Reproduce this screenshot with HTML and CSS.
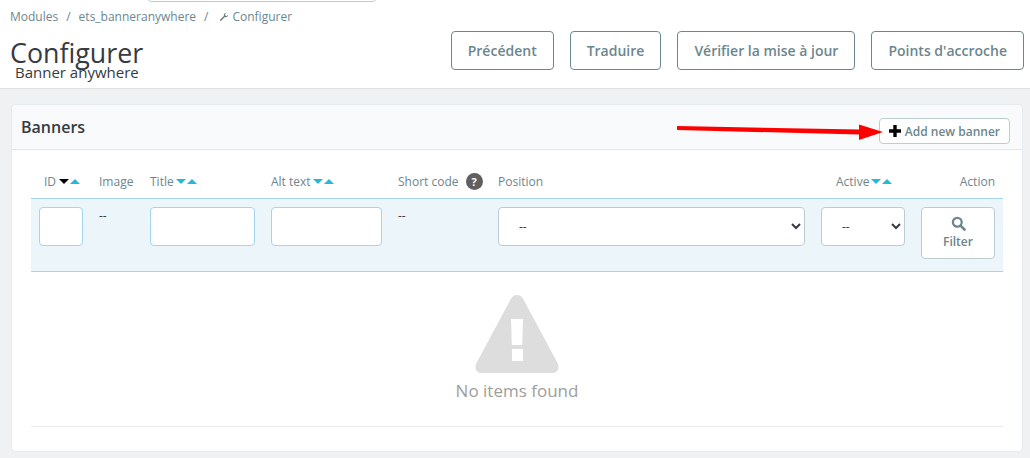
FILE: index.html
```html
<!DOCTYPE html>
<html lang="fr">
<head>
<meta charset="utf-8">
<title>Configurer</title>
<link rel="stylesheet" href="styles.css">
</head>
<body>
<div class="search-stub"></div>
<header class="page-head">
  <div class="head-left">
    <nav class="crumbs">
      <span>Modules</span><span class="sep">/</span><span>ets_banneranywhere</span><span class="sep">/</span>
      <svg class="wrench" viewBox="0 0 12 12" width="10" height="10"><path d="M11 3.2a3 3 0 0 1-4 2.8L2.6 10.6a1 1 0 0 1-1.3-1.3L5.9 4.9A3 3 0 0 1 8.8 1L7.2 2.7l.4 1.8 1.8.4L11 3.2z" fill="#6c7a80"/></svg>
      <span>Configurer</span>
    </nav>
    <h1 class="title">Configurer</h1>
    <div class="subtitle">Banner anywhere</div>
  </div>
  <div class="toolbar">
    <a class="tool-btn">Précédent</a>
    <a class="tool-btn">Traduire</a>
    <a class="tool-btn">Vérifier la mise à jour</a>
    <a class="tool-btn">Points d'accroche</a>
  </div>
</header>
<main class="content">
  <section class="panel">
    <div class="panel-head">
      <h2 class="panel-title">Banners</h2>
      <a class="add-btn">
        <svg viewBox="0 0 12 12" width="12" height="12"><path d="M4.300 0h3.400v4.300H12v3.400H7.700V12H4.300V7.700H0V4.300h4.300z" fill="#000"/></svg>
        Add new banner
      </a>
    </div>
    <div class="panel-body">
      <div class="grid head-row">
        <div class="th id"><span>ID</span><span class="carets"><i class="down dark"></i><i class="up"></i></span></div>
        <div class="th"><span>Image</span></div>
        <div class="th"><span>Title</span><span class="carets"><i class="down"></i><i class="up"></i></span></div>
        <div class="th"><span>Alt text</span><span class="carets"><i class="down"></i><i class="up"></i></span></div>
        <div class="th"><span>Short code</span><span class="help">?</span></div>
        <div class="th"><span>Position</span></div>
        <div class="th active"><span>Active</span><span class="carets"><i class="down"></i><i class="up"></i></span></div>
        <div class="th action"><span>Action</span></div>
      </div>
      <div class="grid filter-row">
        <div class="cell id-cell"><input class="field" type="text"></div>
        <div class="cell dash">--</div>
        <div class="cell"><input class="field" type="text"></div>
        <div class="cell"><input class="field" type="text"></div>
        <div class="cell dash">--</div>
        <div class="cell"><select class="field pick"><option>--</option></select></div>
        <div class="cell"><select class="field pick"><option>--</option></select></div>
        <div class="cell">
          <button class="filter-btn" type="button">
            <svg viewBox="0 0 16 16" width="15" height="15"><circle cx="6.700" cy="6.700" r="4.700" fill="none" stroke="#6c868e" stroke-width="2.400"/><path d="M10.200 10.200l4.300 4.300" stroke="#6c868e" stroke-width="2.800" stroke-linecap="round"/></svg>
            <span>Filter</span>
          </button>
        </div>
      </div>
      <div class="empty">
        <svg class="warn" viewBox="0 0 84 78" width="84" height="78">
          <path fill-rule="evenodd" fill="#dddddd" d="M42 0c3 0 5 2 6.500 4.500L82.500 68c2.500 5 0 10-5 10H6.500c-5 0-7.500-5-5-10L35.500 4.500C37 2 39 0 42 0zM36 24l.8 26h10.400L48 24zM37 54v12h11V54z"/>
        </svg>
        <div class="empty-text">No items found</div>
      </div>
    </div>
  </section>
</main>
<svg class="arrow" viewBox="0 0 207 20" width="207" height="20"><path d="M0 4L182 7.500V2.500L206 10 182 18V12.500L0 8z" fill="#ff0000"/></svg>
</body>
</html>
```

FILE: styles.css
```css
* { box-sizing: border-box; }
html, body { margin: 0; padding: 0; }
body {
  width: 1030px;
  height: 458px;
  overflow: hidden;
  position: relative;
  background: #eff1f2;
  font-family: "Open Sans", sans-serif;
  color: #363a41;
}
.search-stub {
  position: absolute;
  left: 146px;
  top: -10px;
  width: 232px;
  height: 12px;
  border: 1px solid #bbcdd2;
  border-radius: 6px;
  background: #fff;
}
.page-head {
  height: 89px;
  background: #fff;
  border-bottom: 1px solid #dfe3e5;
  display: flex;
  justify-content: space-between;
  padding: 0 6px 0 10px;
}
.crumbs {
  display: flex;
  align-items: center;
  height: 16px;
  margin-top: 9px;
  font-size: 12px;
  line-height: 16px;
  color: #6c868e;
}
.sep { margin: 0 8px; }
.wrench { margin: 0 3px 0 3px; }
.title {
  margin: 10px 0 0;
  font-size: 26.800px;
  font-weight: 400;
  line-height: 36px;
  color: #363a41;
}
.subtitle {
  margin: -7px 0 0 5px;
  font-size: 15px;
  line-height: 16px;
  color: #363a41;
}
.toolbar {
  display: flex;
  gap: 16px;
  margin-top: 31px;
  align-items: flex-start;
}
.tool-btn {
  height: 39px;
  padding: 0 16px;
  display: flex;
  align-items: center;
  white-space: nowrap;
  border: 1px solid #6c868e;
  border-radius: 4px;
  background: #fff;
  font-size: 14px;
  font-weight: 600;
  color: #6c868e;
}
.content { padding: 15px 7px 0 11px; }
.panel {
  height: 348px;
  background: #fff;
  border: 1px solid #e4ecef;
  border-radius: 5px;
  overflow: hidden;
}
.panel-head {
  height: 45px;
  background: #f8fafb;
  border-bottom: 1px solid #dfe8ea;
  display: flex;
  justify-content: space-between;
  align-items: flex-start;
  padding: 0 12px 0 9px;
}
.panel-title {
  margin: 11px 0 0;
  font-size: 16px;
  line-height: 22px;
  font-weight: 600;
  color: #363a41;
}
.add-btn {
  margin-top: 13px;
  height: 26px;
  padding: 0 9px;
  display: flex;
  align-items: center;
  gap: 4px;
  background: #fff;
  border: 1px solid #bbcdd2;
  border-radius: 4px;
  font-size: 12px;
  font-weight: 600;
  color: #6c868e;
}
.panel-body { padding: 0 19px; }
.grid {
  display: grid;
  grid-template-columns: 60px 51px 121px 127px 100px 323px 100px 90px;
}
.head-row { height: 48px; }
.th {
  display: flex;
  align-items: center;
  gap: 2px;
  padding: 14px 8px 0;
  font-size: 12px;
  color: #6c868e;
  white-space: nowrap;
}
.th.id { padding-left: 13px; gap: 3px; }
.th.active { padding-left: 23px; }
.th.action { justify-content: flex-end; }
.carets { display: inline-flex; gap: 1px; align-items: center; }
.carets i {
  width: 0;
  height: 0;
  border-left: 5px solid transparent;
  border-right: 5px solid transparent;
}
.carets .down { border-top: 5px solid #25b9d7; }
.carets .down.dark { border-top-color: #000; }
.carets .up { border-bottom: 5px solid #25b9d7; }
.help {
  flex: none;
  width: 17px;
  height: 17px;
  margin-left: 5px;
  border-radius: 50%;
  background: #5f5f5f;
  color: #fff;
  font-size: 11px;
  font-weight: 700;
  display: flex;
  align-items: center;
  justify-content: center;
}
.filter-row {
  height: 74px;
  background: #ecf5fa;
  border-top: 1px solid #a3d5ee;
  border-bottom: 1px solid #a3d5ee;
}
.cell { padding: 8px 8px 0; font-size: 12px; color: #6c868e; }
.dash { line-height: 18px; color: #363a41; }
.field {
  display: block;
  width: 100%;
  height: 39px;
  background: #fff;
  border: 1px solid #a3d5ee;
  border-radius: 4px;
  font-family: inherit;
  font-size: 12px;
  color: #363a41;
}
.pick {
  border-color: #bbcdd2;
  padding-left: 16px;
}
.filter-btn {
  width: 74px;
  height: 52px;
  padding: 0;
  background: #fff;
  border: 1px solid #bbcdd2;
  border-radius: 4px;
  display: flex;
  flex-direction: column;
  align-items: center;
  justify-content: center;
  gap: 2px;
  font-family: inherit;
  font-size: 12px;
  font-weight: 600;
  color: #6c868e;
}
.empty {
  height: 155px;
  border-bottom: 1px solid #e8ecee;
  display: flex;
  flex-direction: column;
  align-items: center;
  padding-top: 23px;
}
.warn { display: block; }
.empty-text {
  margin-top: 6px;
  font-size: 17px;
  line-height: 24px;
  color: #a09e9a;
}
.arrow {
  position: absolute;
  left: 677px;
  top: 122px;
}
```
